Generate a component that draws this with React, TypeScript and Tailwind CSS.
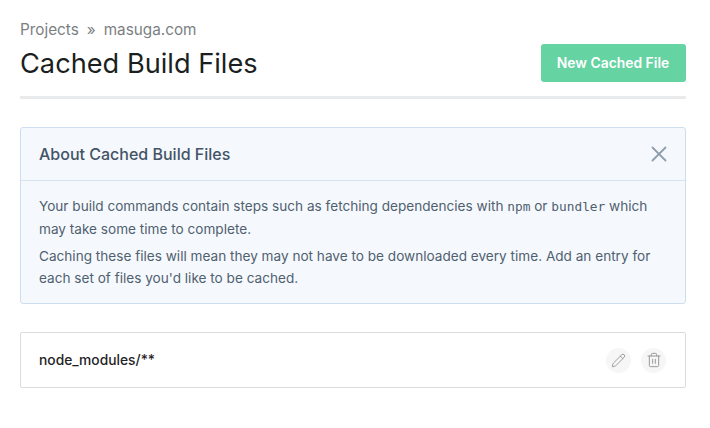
import { X, Pencil, Trash2 } from "lucide-react";

export default function App() {
  return (
    <div className="min-h-[428px] bg-white pl-5 pr-6 pt-5 font-['Inter',sans-serif]">
      <div className="flex items-end justify-between border-b-[3px] border-[#e8eaec] pb-[14px]">
        <div>
          <div className="flex gap-[8px] text-[15.3px] leading-[19px] text-[#7b7f82]">
            <span>Projects</span>
            <span>»</span>
            <span>masuga.com</span>
          </div>
          <h1 className="mt-[7px] text-[27.2px] leading-[36px] font-normal text-[#1c1f21]">Cached Build Files</h1>
        </div>
        <button className="h-[38px] w-[145px] rounded-[3px] bg-[#66d3a3] pr-[1px] text-[13.9px] font-semibold text-white">
          New Cached File
        </button>
      </div>

      <div className="mt-[28px] rounded-[3px] border border-[#cfdeee] bg-[#f5f9fd] text-[#50606f]">
        <div className="flex h-[53px] items-center justify-between border-b border-[#d5e3f0] pl-[18px] pr-[13px]">
          <h2 className="text-[16px] font-medium text-[#435466]">About Cached Build Files</h2>
          <X className="size-[26px] text-[#919eac]" strokeWidth={1.7} />
        </div>
        <div className="px-[18px] pt-[14px] pb-[14px] text-[13.6px]">
          <p className="leading-[23px]">
            Your build commands contain steps such as fetching dependencies with{" "}
            <code className="font-['DejaVu_Sans_Mono',monospace] text-[12.8px]">npm</code> or{" "}
            <code className="font-['DejaVu_Sans_Mono',monospace] text-[12.8px]">bundler</code> which may take some time to complete.
          </p>
          <p className="mt-[4px] leading-[22px]">
            Caching these files will mean they may not have to be downloaded every time. Add an entry for each set of files you'd like to be cached.
          </p>
        </div>
      </div>

      <div className="mt-[28px] flex h-[56px] items-center justify-between rounded-[2px] border border-[#dcdcdc] bg-white pl-[18px] pr-[19px]">
        <span className="text-[13.8px] font-medium text-[#1f2326]">node_modules/**</span>
        <div className="flex gap-[10px]">
          <span className="flex size-[25px] items-center justify-center rounded-full bg-[#f6f6f6]">
            <Pencil className="size-[15px] text-[#999999]" strokeWidth={1.5} />
          </span>
          <span className="flex size-[25px] items-center justify-center rounded-full bg-[#f6f6f6]">
            <Trash2 className="size-[16px] text-[#999999]" strokeWidth={1.5} />
          </span>
        </div>
      </div>
    </div>
  );
}
